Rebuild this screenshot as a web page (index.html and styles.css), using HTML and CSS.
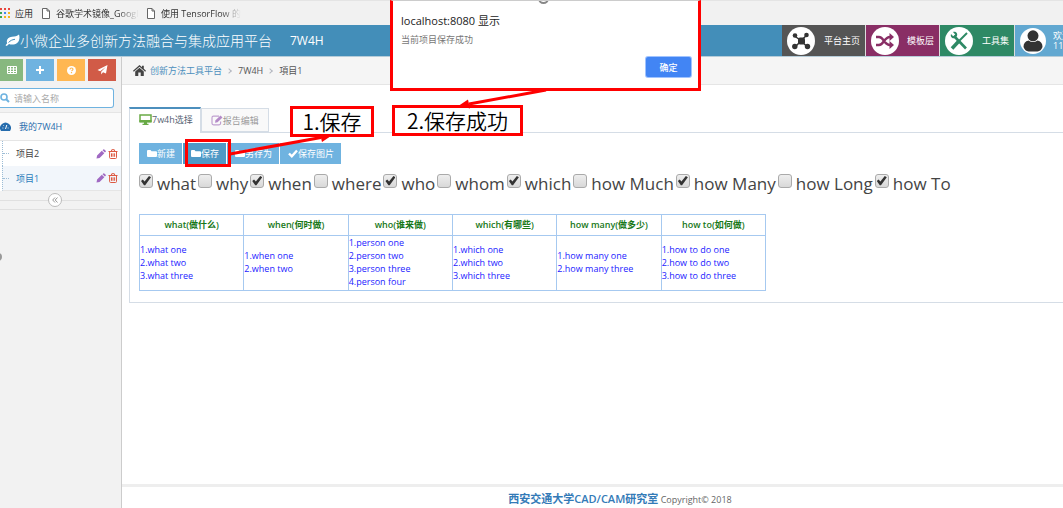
FILE: index.html
```html
<!DOCTYPE html>
<html lang="zh-CN">
<head>
<meta charset="utf-8">
<title>7W4H</title>
<link rel="stylesheet" href="styles.css">
</head>
<body>
<svg class="defs" aria-hidden="true">
  <symbol id="file" viewBox="0 0 8 11"><path d="M.5 .5h4.500l2.500 2.500v7.500h-7zM5 .5v2.500h2.500" fill="#fff" stroke="#666"/></symbol>
  <symbol id="folder" viewBox="0 0 10 9"><path d="M0 2a1 1 0 0 1 1-1h2.500l1 1.200H9a1 1 0 0 1 1 1V7a1 1 0 0 1-1 1H1a1 1 0 0 1-1-1z" fill="currentColor"/></symbol>
  <symbol id="pencil" viewBox="0 0 10 10"><path d="M.5 9.500l.6-3L5.800 1.800l2.500 2.500L3.600 9zM6.500 1.200l.8-.8q.5-.4 1 0l1.400 1.400q.4.5 0 1l-.8.8z" fill="currentColor"/></symbol>
  <symbol id="trash" viewBox="0 0 10 10"><path d="M.5 2.500h9M3.300 2.300l.5-1.600h2.500l.5 1.600M1.600 3v5.500q0 1 1 1h4.900q1 0 1-1V3M3.500 4.300v3.500M5 4.300v3.500M6.600 4.300v3.500" fill="none" stroke="currentColor"/></symbol>
</svg>

<nav class="bookmarks">
  <a class="bookmark apps" href="#">
    <svg width="10" height="10" viewBox="0 0 10 10"><g fill="#e8453c"><path d="M0 0h2v2H0zM4 0h2v2H4zM8 0h2v2H8z"/></g><path d="M0 4h2v2H0z" fill="#3aa757"/><path d="M4 4h2v2H4z" fill="#4285f4"/><path d="M8 4h2v2H8z" fill="#f6b51e"/><path d="M0 8h2v2H0z" fill="#3aa757"/><path d="M4 8h2v2H4zM8 8h2v2H8z" fill="#f6b51e"/></svg>
    <span>应用</span>
  </a>
  <a class="bookmark page" href="#"><svg width="8" height="11"><use href="#file"/></svg><span class="fade">谷歌学术镜像_Googl</span></a>
  <a class="bookmark page" href="#"><svg width="8" height="11"><use href="#file"/></svg><span class="fade">使用 TensorFlow 的</span></a>
</nav>

<header class="navbar">
  <h1 class="brand">
    <svg width="15" height="13" viewBox="0 0 15 13"><path d="M14 .5C15.500 5 13.500 10 8.500 10.500c-2 .2-3.500-.2-4.500-.6L1.800 12 .5 11.300l1.700-2C.8 6 3 3 7 2.700c3 0 5-.5 7-2.200z" fill="#fff"/><path d="M3.500 8.500C5.500 6.500 7 5.700 10 5.300" stroke="#438eb9" fill="none"/></svg>
    <span>小微企业多创新方法融合与集成应用平台</span><span class="product">7W4H</span>
  </h1>
  <nav class="shortcuts">
    <a class="shortcut gray" href="#">
      <svg width="28" height="28" viewBox="0 0 28 28"><circle cx="14" cy="14" r="14" fill="#fff"/><path d="M7.500 9L14 13.500l6-5.500M8 20l6-6 6 5.500" stroke="#333" stroke-width="1.500" fill="none"/><g fill="#333"><rect x="11" y="10.500" width="7" height="7" rx="2"/><circle cx="8" cy="8.500" r="2.300"/><circle cx="19.500" cy="8" r="2.300"/><circle cx="7.800" cy="19.500" r="2.700"/><circle cx="20.500" cy="19.500" r="2.700"/></g></svg>
      <span>平台主页</span></a>
    <a class="shortcut purple" href="#">
      <svg width="28" height="28" viewBox="0 0 28 28"><circle cx="14" cy="14" r="14" fill="#fff"/><path d="M5 10h3c5 0 5 8 11 8h1M5 18h3c5 0 5-8 11-8h1" fill="none" stroke="#892e65" stroke-width="2.400"/><path d="M18.500 6l4.500 4-4.500 4zM18.500 14l4.500 4-4.500 4z" fill="#892e65"/></svg>
      <span>模板层</span></a>
    <a class="shortcut green" href="#">
      <svg width="28" height="28" viewBox="0 0 28 28"><circle cx="14" cy="14" r="14" fill="#fff"/><path d="M9 9l12 12.500" stroke="#2e8965" stroke-width="2.600"/><path d="M22 6l-8.500 8.500" stroke="#2e8965" stroke-width="2"/><path d="M13.500 14.500l-6.500 7" stroke="#2e8965" stroke-width="3.500"/><path d="M6 7l2.200 2.200 2-1.800L8 5c3-.8 5 1.500 4 4L10 11C7.500 12 5 10 6 7z" fill="#2e8965"/></svg>
      <span>工具集</span></a>
    <a class="shortcut blue" href="#">
      <svg width="26" height="26" viewBox="0 0 26 26"><circle cx="13" cy="13" r="13" fill="#fff"/><circle cx="13" cy="7.800" r="5.500" fill="#333"/><path d="M3.500 19q0-5.500 5-6.500 4.500 3.200 9 0 5 1 5 6.500-1.500 4-5 4.500h-9q-3.500-.5-5-4.500z" fill="#333"/></svg>
      <span class="user"><span>欢迎</span><span>11</span></span></a>
  </nav>
</header>

<div class="layout">
  <aside class="sidebar">
    <div class="actions">
      <button class="action success" aria-label="表格"><svg width="10" height="8" viewBox="0 0 10 8"><path d="M.5 .5h9v7h-9zM.5 3h9M.5 5.500h9M3.500 0v8M6.500 0v8" fill="none" stroke="#fff"/></svg></button>
      <button class="action info" aria-label="新增"><svg width="8" height="8" viewBox="0 0 8 8"><path d="M4 0v8M0 4h8" stroke="#fff" stroke-width="2"/></svg></button>
      <button class="action warning" aria-label="帮助"><svg width="9" height="9" viewBox="0 0 9 9"><circle cx="4.500" cy="4.500" r="4.500" fill="#fff"/><path d="M3 3.500q0-1.500 1.500-1.500T6 3.300q0 .8-1.500 1.700M4.500 6v1.300" fill="none" stroke="#ffb752" stroke-width="1.200"/></svg></button>
      <button class="action danger" aria-label="发送"><svg width="11" height="10" viewBox="0 0 11 10"><path d="M10.500 0L9 8.500 6 7.300 4.200 9.500V6.700L8.800 2 3.200 6.200.5 5z" fill="#fff"/></svg></button>
    </div>
    <div class="search">
      <svg width="10" height="10" viewBox="0 0 10 10"><circle cx="4" cy="4" r="3" fill="none" stroke="#6fb3e0" stroke-width="1.600"/><path d="M6.200 6.200L9 9" stroke="#6fb3e0" stroke-width="2"/></svg>
      <input type="text" aria-label="名称" placeholder="请输入名称">
    </div>
    <a class="root" href="#"><svg width="11" height="9" viewBox="0 0 11 9"><path d="M1 9A5.400 5.400 0 1 1 10 9z" fill="#266cad"/><path d="M2.500 6h.8M3.300 3.200l.6.6M8.500 6h-.8M5.500 7l1.300-4" stroke="#fff"/></svg><span>我的7W4H</span></a>
    <ul class="projects">
      <li><a href="#">项目2</a><button class="edit" aria-label="编辑"><svg width="10" height="10"><use href="#pencil"/></svg></button><button class="remove" aria-label="删除"><svg width="10" height="10"><use href="#trash"/></svg></button></li>
      <li class="active"><a href="#">项目1</a><button class="edit" aria-label="编辑"><svg width="10" height="10"><use href="#pencil"/></svg></button><button class="remove" aria-label="删除"><svg width="10" height="10"><use href="#trash"/></svg></button></li>
    </ul>
    <div class="collapse"><button aria-label="收起"><svg width="6" height="6" viewBox="0 0 6 6"><path d="M3 .5L.7 3 3 5.500M5.500 .5L3.200 3l2.300 2.500" fill="none" stroke="#999"/></svg></button></div>
    <i class="handle"></i>
  </aside>

  <main class="main">
    <nav class="crumbs">
      <svg width="13" height="11" viewBox="0 0 13 11"><path d="M6.500 0L9 2.200V.8h1.800v3L13 5.800l-.8.9L6.500 1.700.8 6.700 0 5.800z" fill="#444"/><path d="M6.500 2.800l4.300 3.700V11H7.700V7.500H5.300V11H2.200V6.500z" fill="#444"/></svg>
      <a href="#">创新方法工具平台</a><i class="sep"></i><span>7W4H</span><i class="sep"></i><span>項目1</span>
    </nav>
    <div class="content">
      <div class="tabs" role="tablist">
        <button class="tab current" role="tab" aria-selected="true"><svg width="13" height="11" viewBox="0 0 13 11"><path d="M1 1h11v6.500H1z" fill="#fff" stroke="#69aa46" stroke-width="1.500"/><path d="M.5 6h12v2.500H.5zM5 8.500h3v1.200h1.500V11h-6V9.700H5z" fill="#69aa46"/></svg>7w4h选择</button>
        <button class="tab" role="tab" aria-selected="false"><svg width="12" height="11" viewBox="0 0 12 11"><path d="M8 1.200H2.500Q1 1.200 1 2.700v5.600q0 1.500 1.500 1.500h5.600q1.500 0 1.500-1.500V6.500" fill="none" stroke="#c0a0d0" stroke-width="1.200"/><path d="M4 7.800l.5-2.500L9.500.5l2 2L6.500 7.300z" fill="#b48ac8"/></svg>报告编辑</button>
      </div>
      <section class="panel">
        <div class="toolbar">
          <button><svg width="10" height="9"><use href="#folder"/></svg>新建</button>
          <button class="pressed"><svg width="10" height="9"><use href="#folder"/></svg>保存</button>
          <button><svg width="10" height="9"><use href="#folder"/></svg>另存为</button>
          <button><svg width="10" height="9" viewBox="0 0 10 9"><path d="M1 4.500L3.800 7.300 9 1.500" stroke="#fff" stroke-width="2.400" fill="none"/></svg>保存图片</button>
        </div>
        <div class="options">
          <label><input type="checkbox" checked>what</label>
          <label><input type="checkbox">why</label>
          <label><input type="checkbox" checked>when</label>
          <label><input type="checkbox">where</label>
          <label><input type="checkbox" checked>who</label>
          <label><input type="checkbox">whom</label>
          <label><input type="checkbox" checked>which</label>
          <label><input type="checkbox">how Much</label>
          <label><input type="checkbox" checked>how Many</label>
          <label><input type="checkbox">how Long</label>
          <label><input type="checkbox" checked>how To</label>
        </div>
        <table class="grid">
          <thead><tr><th>what(做什么)</th><th>when(何时做)</th><th>who(谁来做)</th><th>which(有哪些)</th><th>how many(做多少)</th><th>how to(如何做)</th></tr></thead>
          <tbody><tr>
            <td>1.what one<br>2.what two<br>3.what three</td>
            <td>1.when one<br>2.when two</td>
            <td>1.person one<br>2.person two<br>3.person three<br>4.person four</td>
            <td>1.which one<br>2.which two<br>3.which three</td>
            <td>1.how many one<br>2.how many three</td>
            <td>1.how to do one<br>2.how to do two<br>3.how to do three</td>
          </tr></tbody>
        </table>
      </section>
    </div>
    <footer class="footer"><strong>西安交通大学CAD/CAM研究室</strong> <span>Copyright© 2018</span></footer>
  </main>
</div>

<div class="dialog" role="alertdialog" aria-labelledby="dt">
  <i class="knob"></i>
  <h2 id="dt">localhost:8080 显示</h2>
  <p>当前项目保存成功</p>
  <button>确定</button>
</div>
<div class="note note-frame"></div>
<div class="note note-save">1.保存</div>
<div class="note note-done">2.保存成功</div>
<svg class="arrows" width="720" height="170" viewBox="0 0 720 170" aria-hidden="true">
  <path d="M230 154L321 137.500M546 90L469 104" stroke="#f00" stroke-width="3"/>
  <path d="M331 136l-9 6-2-8zM459 105.500l9-6 2 9z" fill="#f00"/>
</svg>
</body>
</html>
```
FILE: styles.css
```css
* { box-sizing: border-box; }
body {
  margin: 0;
  min-height: 100vh;
  display: flex;
  flex-direction: column;
  position: relative;
  overflow: hidden;
  background: #fff;
  color: #444;
  font: 9px/13px "Open Sans", "Noto Sans CJK SC", sans-serif;
}
a { color: inherit; text-decoration: none; }
button { font: inherit; color: inherit; border: 0; padding: 0; background: none; display: flex; align-items: center; }
svg { flex: none; display: block; }
.defs { position: absolute; width: 0; height: 0; }

.bookmarks { display: flex; align-items: center; height: 25px; background: #f1f1f1; border-top: 1px solid #e4e4e4; color: #333; }
.bookmark { display: flex; align-items: center; gap: 6px; }
.apps { gap: 5px; padding-right: 9px; white-space: nowrap; }
.page { gap: 6px; min-width: 105px; white-space: nowrap; }
.fade { -webkit-mask-image: linear-gradient(90deg, #000 75%, transparent); mask-image: linear-gradient(90deg, #000 75%, transparent); }

.navbar { display: flex; justify-content: space-between; height: 32px; background: #438eb9; border-bottom: 1px solid #b5ccd9; color: #fff; }
.brand { display: flex; align-items: center; margin: 0; padding-left: 5px; font-size: 14px; font-weight: 300; white-space: nowrap; }
.product { padding-left: 18px; font-size: 12px; font-weight: 400; }
.shortcuts { display: flex; width: 281px; overflow: hidden; }
.shortcut { display: flex; flex: none; align-items: center; justify-content: space-between; padding: 0 5px; border-right: 1px solid #ddd; line-height: 10px; white-space: nowrap; }
.gray { width: 84px; background: #555; }
.purple { width: 74px; background: #892e65; }
.green { width: 75px; background: #2e8965; }
.blue { background: #62a8d1; gap: 7px; }
.user { display: flex; flex-direction: column; }

.layout { flex: 1; display: flex; }
.sidebar { position: relative; flex: none; width: 122px; background: #f2f2f2; border-right: 1px solid #ccc; }
.actions { display: flex; gap: 3px; height: 27px; padding: 2px 5px 3px 0; }
.action { flex: 1; justify-content: center; }
.action:first-child { flex: 0 0 23px; }
.success { background: #87b87f; }
.info { background: #6fb3e0; }
.warning { background: #ffb752; }
.danger { background: #d15b47; }
.search { display: flex; align-items: center; gap: 4px; height: 20px; margin: 4px 7px 4px 0; border: 1px solid #6fb3e0; border-left: 0; border-radius: 0 3px 3px 0; background: #fff; }
.search input { width: 90px; padding: 0; border: 0; outline: 0; font: inherit; background: none; }
.search input::placeholder { color: #aaa; }
.root { display: flex; align-items: center; gap: 8px; height: 29px; border: solid #e5e5e5; border-width: 1px 0; background: #fafafa; color: #2b6fae; }
.projects { list-style: none; margin: 0; padding: 0; background: #fff; }
.projects li { display: flex; align-items: center; height: 25px; padding-right: 3px; border-left: 1px dotted #9dbdd6; margin-left: 2px; }
.projects li::before { content: ""; width: 6px; margin-right: 7px; border-top: 1px dotted #9dbdd6; }
.projects a { flex: 1; }
.projects .active { background: #f2f6fb; color: #2b7dbc; border-bottom: 1px solid #e5e5e5; }
.edit { color: #a069c3; margin-right: 2px; }
.remove { color: #dd5a43; }
.collapse { display: flex; justify-content: center; align-items: center; height: 19px; padding-right: 11px; border-bottom: 1px solid #e0e0e0; background: linear-gradient(#e0e0e0, #e0e0e0) 0 9px / 110px 1px no-repeat; }
.collapse button { justify-content: center; width: 14px; height: 14px; border: 1px solid #bbb; border-radius: 50%; background: #fff; }
.handle { position: absolute; top: 196px; left: -6px; width: 8px; height: 8px; border-radius: 50%; background: #999; }

.main { flex: 1; min-width: 0; display: flex; flex-direction: column; }
.crumbs { display: flex; align-items: center; height: 28px; padding-left: 11px; background: #f5f5f5; border-bottom: 1px solid #e5e5e5; color: #555; }
.crumbs a { margin-left: 4px; color: #4c8fbd; }
.sep { width: 4px; height: 4px; margin: 0 7px 0 5px; border: solid #b2b6bf; border-width: 1px 1px 0 0; transform: rotate(45deg); }
.content { flex: 1; padding: 22px 0 0 7px; }
.tabs { display: flex; align-items: flex-end; height: 25px; position: relative; z-index: 1; }
.tab { height: 24px; padding: 0 9px; border: 1px solid #d5dde6; background: #f9f9f9; color: #999; }
.tab.current { height: 26px; margin-bottom: -1px; padding: 0 7px 3px 9px; border-top: 2px solid #4c8fbd; border-bottom: 0; background: #fff; color: #576373; }
.panel { padding: 10px 8px 11px; border: solid #d5dde6; border-width: 1px 0 1px 1px; }
.toolbar { display: flex; gap: 1px; height: 21px; color: #fff; }
.toolbar button { padding: 0 7px 0 8px; background: #6fb3e0; }
.toolbar .pressed { background: #4f99c6; }
.options { display: flex; gap: 2px; margin: 7px 0 17px; font-size: 17px; line-height: 26px; white-space: nowrap; }
.options label { display: flex; }
.options input { appearance: none; width: 14px; height: 14px; margin: 3px 4px 0 0; border: 1px solid #aaa; border-radius: 3px; background: linear-gradient(#eee, #d8d8d8); }
.options input:checked::after { content: ""; display: block; width: 10px; height: 10px; margin: 1px; background: #333; clip-path: polygon(0 50%, 18% 36%, 36% 56%, 80% 0, 100% 12%, 42% 92%, 30% 92%); }
.grid { width: 627px; margin-left: 1px; table-layout: fixed; border-collapse: collapse; }
.grid th, .grid td { border: 1px solid #a6c9f0; padding: 0; }
.grid th { height: 21px; padding-bottom: 2px; color: #187818; font-weight: 600; }
.grid td { height: 54px; padding-bottom: 2px; color: #22f; vertical-align: middle; }
.toolbar, .options { margin-left: 1px; }
.footer { height: 24px; padding: 5px 0 0 55px; border-top: 3px solid #eee; text-align: center; color: #666; }
.footer strong { font-size: 11px; font-weight: 600; color: #337ab7; }

.dialog { position: absolute; top: 0; left: 390px; width: 311px; height: 91px; padding: 13px 8px 0; border: 3px solid #f00; border-top: 1px solid #ccc; background: #fff; overflow: hidden; }
.dialog h2 { margin: 0; font-size: 11px; font-weight: 400; line-height: 14px; color: #222; }
.dialog p { margin: 5px 0 11px; color: #777; }
.dialog button { justify-content: center; width: 45px; height: 20px; margin-left: auto; margin-right: -1px; border-radius: 2px; background: #4285f4; color: #fff; font-weight: 500; box-shadow: 0 0 0 1px #a0c3ff; }
.knob { position: absolute; top: -8px; left: 145px; width: 11px; height: 11px; border: 2px solid #888; border-radius: 50%; }
.note { position: absolute; z-index: 2; border: 3px solid #f00; color: #000; font: 350 21px/24px "Noto Sans CJK SC", sans-serif; text-align: center; }
.note-frame { top: 139px; left: 185px; width: 46px; height: 28px; }
.note-save { top: 106px; left: 290px; width: 84px; height: 31px; background: #fff; }
.note-done { top: 105px; left: 392px; width: 131px; height: 31px; background: #fff; }
.arrows { position: absolute; top: 0; left: 0; z-index: 3; pointer-events: none; }
```
